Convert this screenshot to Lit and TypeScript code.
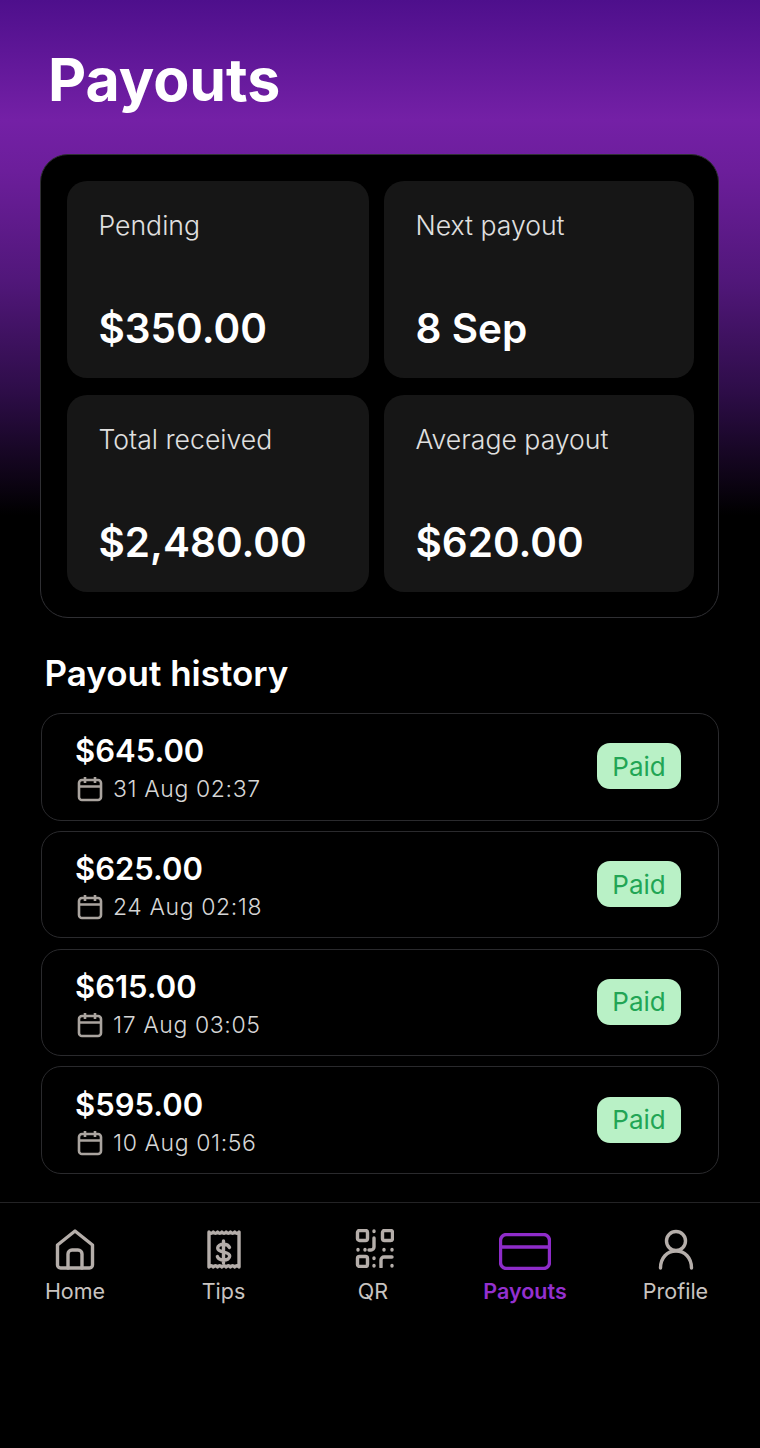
import { LitElement, html, css, svg } from "lit";
import { customElement } from "lit/decorators.js";

const stats = [
  { label: "Pending", value: "$350.00" },
  { label: "Next payout", value: "8 Sep" },
  { label: "Total received", value: "$2,480.00" },
  { label: "Average payout", value: "$620.00" },
];

const payouts = [
  { amount: "$645.00", date: "31 Aug 02:37" },
  { amount: "$625.00", date: "24 Aug 02:18" },
  { amount: "$615.00", date: "17 Aug 03:05" },
  { amount: "$595.00", date: "10 Aug 01:56" },
];

// scalloped receipt edges, seven bumps along 30px
const receipt =
  "M2 3" + "q2.140 2.500 4.290 0".repeat(7) + "V38" + "q-2.140-2.500-4.290 0".repeat(7) + "z";

const icons: Record<string, unknown> = {
  home: svg`<path d="M2.500 16 20 2 37.500 16v20a3 3 0 0 1-3 3h-29a3 3 0 0 1-3-3z"/><path d="M13 39V25a4 4 0 0 1 4-4h6a4 4 0 0 1 4 4v14"/>`,
  tips: svg`<path d=${receipt}/><path d="M22.500 18.500c-.8-2-3-3.300-6-3.300-3.400 0-5.800 1.600-5.800 3.900 0 5.500 12 2.500 12 8 0 2.400-2.500 3.900-6 3.900-3.200 0-5.500-1.300-6.300-3.400M16.500 12v22"/>`,
  qr: svg`<rect x="1.500" y="1.500" width="10" height="10" rx="2"/><rect x="26.500" y="1.500" width="10" height="10" rx="2"/><rect x="1.500" y="27.500" width="10" height="10" rx="2"/><path d="M18 2v.5M18 9v9a3 3 0 0 1-3 3h-2M2 20.500v.5M9 20.500v.5M28 20.500v.5M36 20.500v.5M18 29v.5M18 36.500v.5M25 38v-7a3 3 0 0 1 3-3h8M36 36.500v.5"/>`,
  card: svg`<rect x="1.500" y="1.500" width="49" height="34" rx="6"/><path d="M2 14h48"/>`,
  profile: svg`<circle cx="18" cy="12" r="9.500"/><path d="M2.500 39C2.500 29 9 22 18 22s15.500 7 15.500 17"/>`,
};

const nav = [
  { label: "Home", icon: "home", box: "0 0 40 41", w: 40, h: 41 },
  { label: "Tips", icon: "tips", box: "0 0 34 41", w: 34, h: 41 },
  { label: "QR", icon: "qr", box: "-4 0 42 39", w: 42, h: 39 },
  { label: "Payouts", icon: "card", box: "0 0 52 37", w: 52, h: 37, active: true },
  { label: "Profile", icon: "profile", box: "0 0 36 41", w: 36, h: 41 },
];

@customElement("app-root")
export class AppRoot extends LitElement {
  static styles = css`
    :host {
      display: block;
      width: 760px;
      height: 1448px;
      background: #000;
      color: #fff;
      font-family: Inter, "Liberation Sans", sans-serif;
      overflow: hidden;
    }
    .top {
      height: 600px;
      margin-bottom: -446px;
      padding: 46px 48px 0;
      box-sizing: border-box;
      background: linear-gradient(180deg, #4e0f8c 0, #7420a6 120px, #6c1e9b 170px, #51177a 280px, #2e0d49 390px, #000 515px);
    }
    h1 {
      margin: 0;
      font-size: 59px;
      line-height: 68px;
      font-weight: 700;
    }
    .summary {
      margin: 0 41px 0 40px;
      height: 464px;
      box-sizing: border-box;
      padding: 26px 24px 0 25.500px;
      display: grid;
      grid-template-columns: 302px 310px;
      grid-template-rows: 197px 197px;
      gap: 17px 15px;
      background: #000;
      border: 1.5px solid #2f2f33;
      border-radius: 28px;
    }
    .stat {
      background: #161616;
      border-radius: 20px;
      padding: 28px 32px 0;
      display: flex;
      flex-direction: column;
      gap: 61px;
    }
    .stat span {
      font-size: 26.600px;
      line-height: 33px;
      font-weight: 300;
      color: #e0e0e0;
    }
    .stat strong {
      font-size: 40.500px;
      line-height: 52px;
      font-weight: 600;
    }
    h2 {
      margin: 32px 0 17px 44.500px;
      font-size: 35px;
      line-height: 46px;
      font-weight: 600;
    }
    .list {
      margin: 0 41px;
      display: flex;
      flex-direction: column;
      gap: 10.300px;
    }
    .row {
      height: 107.500px;
      box-sizing: border-box;
      padding: 0 37px 0 33px;
      display: flex;
      align-items: center;
      justify-content: space-between;
      border: 1.5px solid #2a2a2d;
      border-radius: 20px;
    }
    .info {
      padding-top: 4px;
    }
    .amount {
      font-size: 31px;
      line-height: 38px;
      font-weight: 600;
    }
    .date {
      display: flex;
      align-items: center;
      gap: 10px;
      margin: 3px 0 0 2px;
      font-size: 23px;
      line-height: 32px;
      font-weight: 300;
      color: #d6d6d6;
      letter-spacing: 0.6px;
    }
    .date svg {
      fill: none;
      stroke: #aaa49f;
      stroke-width: 2.6;
    }
    .paid {
      width: 84px;
      height: 46px;
      margin-bottom: 1px;
      display: flex;
      align-items: center;
      justify-content: center;
      border-radius: 13px;
      background: #b9f1c6;
      color: #22a555;
      font-size: 26px;
    }
    nav {
      margin-top: 28.500px;
      padding-top: 26px;
      border-top: 1px solid #232325;
      display: grid;
      grid-template-columns: 150px 147px 152px 152px 149px;
    }
    .tab {
      display: flex;
      flex-direction: column;
      align-items: center;
      color: #c9c4c0;
      font-size: 21.500px;
      line-height: 28px;
      font-weight: 400;
    }
    .slot {
      height: 48px;
      display: flex;
      align-items: flex-start;
      justify-content: center;
    }
    .tab svg {
      fill: none;
      stroke: #b5aeaa;
      stroke-width: 3.400;
      stroke-linecap: round;
      stroke-linejoin: round;
    }
    .tab.active {
      color: #9430cf;
      font-weight: 600;
    }
    .tab.active svg {
      stroke: #8e2cc9;
      margin-top: 4px;
    }
  `;

  render() {
    return html`
      <div class="top"><h1>Payouts</h1></div>
      <section class="summary">
        ${stats.map(
          (s) => html`<div class="stat"><span>${s.label}</span><strong>${s.value}</strong></div>`
        )}
      </section>
      <h2>Payout history</h2>
      <div class="list">
        ${payouts.map(
          (p) => html`
            <div class="row">
              <div class="info">
                <div class="amount">${p.amount}</div>
                <div class="date">
                  <svg width="26" height="26" viewBox="0 0 26 26">
                    <rect x="2" y="4" width="22" height="20" rx="3" />
                    <path d="M2 10.500h22M8 1v6M18 1v6" />
                  </svg>
                  ${p.date}
                </div>
              </div>
              <div class="paid">Paid</div>
            </div>
          `
        )}
      </div>
      <nav>
        ${nav.map(
          (n) => html`
            <div class="tab ${n.active ? "active" : ""}">
              <div class="slot">
                <svg width=${n.w} height=${n.h} viewBox=${n.box}>${icons[n.icon]}</svg>
              </div>
              ${n.label}
            </div>
          `
        )}
      </nav>
    `;
  }
}
